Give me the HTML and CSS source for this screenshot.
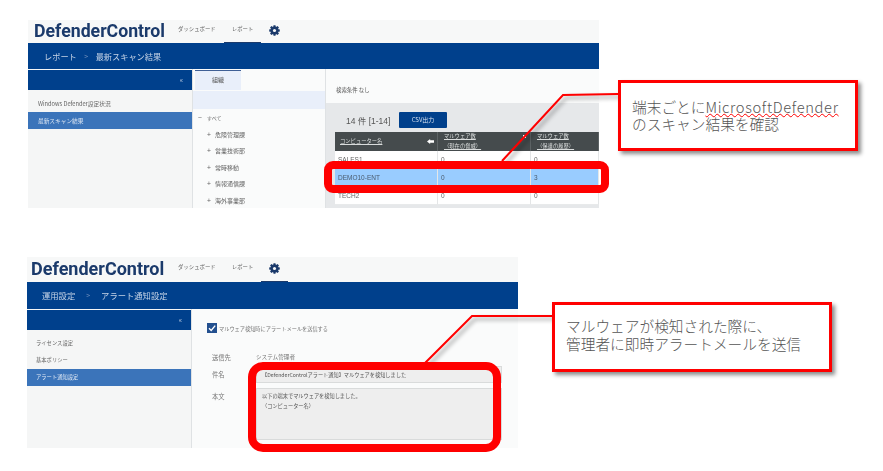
FILE: index.html
```html
<!DOCTYPE html>
<html lang="ja">
<head>
    <meta charset="utf-8" />
    <title>DefenderControl</title>
    <link rel="stylesheet" href="styles.css">
</head>
<body>
    <div class="slide">
        <!-- report screen -->
        <div class="shot shot-report">
            <div class="topbar">
                <span class="logo">DefenderControl</span>
                <a class="nav">ダッシュボード</a>
                <a class="nav active">レポート</a>
                <a class="nav gear">
                    <svg width="11" height="11" viewBox="0 0 24 24"><use href="#cog"/></svg>
                </a>
            </div>
            <div class="crumb"><span>レポート</span><span class="sep">&gt;</span><span>最新スキャン結果</span></div>
            <div class="main">
                <div class="side">
                    <div class="side-head">&laquo;</div>
                    <div class="side-list">
                        <div class="side-item">Windows Defender設定状況</div>
                        <div class="side-item selected">最新スキャン結果</div>
                    </div>
                </div>
                <div class="tree">
                    <div class="tab-row"><div class="tab">組織</div></div>
                    <div class="strip"></div>
                    <ul class="tree-list">
                        <li class="root">すべて</li>
                        <li>危険管理課</li>
                        <li>営業技術部</li>
                        <li>常時移動</li>
                        <li>情報通信課</li>
                        <li>海外事業部</li>
                    </ul>
                </div>
                <div class="result">
                    <div class="cond">検索条件 なし</div>
                    <div class="result-body">
                        <div class="count-row">
                            <span class="count">14 件 [1-14]</span>
                            <a class="csv">CSV出力</a>
                        </div>
                        <div class="grid">
                            <div class="th th-one">コンピューター名<i class="arrow"></i></div>
                            <div class="th">マルウェア数<br>（現在の脅威）<i class="dot"></i></div>
                            <div class="th">マルウェア数<br>（保護の履歴）</div>
                            <div class="td">SALES1</div><div class="td">0</div><div class="td">0</div>
                            <div class="td hit">DEMO10-ENT</div><div class="td hit">0</div><div class="td hit">3</div>
                            <div class="td">TECH2</div><div class="td">0</div><div class="td">0</div>
                        </div>
                    </div>
                </div>
            </div>
        </div>

        <!-- alert settings screen -->
        <div class="shot shot-alert">
            <div class="topbar">
                <span class="logo">DefenderControl</span>
                <a class="nav">ダッシュボード</a>
                <a class="nav">レポート</a>
                <a class="nav gear active">
                    <svg width="11" height="11" viewBox="0 0 24 24"><use href="#cog"/></svg>
                </a>
            </div>
            <div class="crumb crumb-big"><span>運用設定</span><span class="sep">&gt;</span><span>アラート通知設定</span></div>
            <div class="main">
                <div class="side">
                    <div class="side-head">&laquo;</div>
                    <div class="side-list">
                        <div class="side-item">ライセンス設定</div>
                        <div class="side-item">基本ポリシー</div>
                        <div class="side-item selected">アラート通知設定</div>
                    </div>
                </div>
                <div class="form">
                    <div class="check-row">
                        <span class="check">
                            <svg width="10" height="10" viewBox="0 0 10 10"><path d="M2 5.2 L4.2 7.4 L8.2 2.6" fill="none" stroke="#fff" stroke-width="1.4"/></svg>
                        </span>
                        マルウェア検知時にアラートメールを送信する
                    </div>
                    <div class="form-grid">
                        <div class="label">送信先</div>
                        <div class="value">システム管理者</div>
                        <div class="label">件名</div>
                        <div class="input">【DefenderControlアラート通知】マルウェアを検知しました</div>
                        <div class="label label-body">本文</div>
                        <div class="input area">以下の端末でマルウェアを検知しました。<br>（コンピューター名）</div>
                    </div>
                </div>
            </div>
        </div>

        <!-- annotations -->
        <svg class="lines" width="883" height="471">
            <polyline points="618,94 563,95 502,161" fill="none" stroke="#ff0000" stroke-width="2"/>
            <polyline points="552,316 472,316 425,363" fill="none" stroke="#ff0000" stroke-width="2"/>
        </svg>
        <div class="frame frame-row"></div>
        <div class="frame frame-mail"></div>
        <div class="note note-one">
            <div class="note-line">端末ごとに<span class="typo">MicrosoftDefender</span></div>
            <div class="note-line">のスキャン結果を確認</div>
        </div>
        <div class="note note-two">
            <div class="note-line">マルウェアが検知された際に、</div>
            <div class="note-line">管理者に即時アラートメールを送信</div>
        </div>
    </div>

    <svg width="0" height="0" class="defs">
        <symbol id="cog" viewBox="0 0 24 24">
            <g fill="#1b3a6b">
                <rect x="9.5" y="0.5" width="5" height="23" rx="1"/>
                <rect x="9.5" y="0.5" width="5" height="23" rx="1" transform="rotate(45 12 12)"/>
                <rect x="9.5" y="0.5" width="5" height="23" rx="1" transform="rotate(90 12 12)"/>
                <rect x="9.5" y="0.5" width="5" height="23" rx="1" transform="rotate(135 12 12)"/>
            </g>
            <circle cx="12" cy="12" r="6.5" fill="none" stroke="#1b3a6b" stroke-width="4"/>
            <circle cx="12" cy="12" r="3.4" fill="#f7f8f8"/>
        </symbol>
    </svg>
</body>
</html>
```

FILE: styles.css
```css
html, body {
    margin: 0;
    padding: 0;
    background: #fff;
    overflow: hidden;
}

.slide {
    position: relative;
    width: 883px;
    height: 471px;
    font-family: "Noto Sans CJK JP", "Liberation Sans", sans-serif;
    color: #555;
}

.defs {
    position: absolute;
}

/* screenshots sit on the slide like pictures */
.shot {
    position: absolute;
    display: flex;
    flex-direction: column;
    overflow: hidden;
    background: #f5f6f6;
    filter: blur(0.4px);
    font-size: 6px;
}

.shot-report {
    left: 28px;
    top: 20px;
    width: 571px;
    height: 188px;
}

.shot-alert {
    left: 27px;
    top: 257px;
    width: 491px;
    height: 191px;
}

.topbar {
    display: flex;
    align-items: stretch;
    height: 23px;
    flex: none;
    background: #f7f8f8;
}

.shot-alert .topbar {
    height: 25px;
}

.logo {
    margin-left: 6px;
    width: 136px;
    font-family: Roboto, "Liberation Sans", sans-serif;
    font-size: 17.7px;
    font-weight: 700;
    line-height: 22px;
    color: #1b3a6b;
}

.shot-alert .logo {
    margin-left: 4px;
    width: 139px;
    font-size: 18px;
    line-height: 24px;
}

.nav {
    display: flex;
    align-items: center;
    padding: 0 8px 4px;
    font-size: 5.4px;
    color: #666;
    border-bottom: 1px solid transparent;
}

.nav.active {
    border-bottom-color: #1b3a6b;
}

.gear {
    padding: 0 8px 2px;
}

.crumb {
    display: flex;
    align-items: center;
    gap: 7.5px;
    height: 26px;
    flex: none;
    box-sizing: border-box;
    padding: 0 0 1px 16px;
    background: #00408c;
    color: #c5d3e6;
    font-size: 8.2px;
}

.crumb-big {
    height: 27px;
    gap: 11px;
    padding-left: 15px;
    font-size: 8.3px;
}

.sep {
    font-size: 7px;
    color: #6f8fbc;
}

.main {
    display: flex;
    flex: 1;
    min-height: 0;
}

.side {
    width: 165px;
    flex: none;
    box-sizing: border-box;
    border-right: 1px solid #dfe2e4;
}

.side-head {
    height: 20px;
    margin-top: 1px;
    padding-right: 9px;
    background: #00408c;
    color: #b9c9df;
    font-size: 7px;
    line-height: 18px;
    text-align: right;
}

.side-list {
    padding-top: 5px;
}

.side-item {
    height: 17px;
    padding-left: 10px;
    font-size: 5.7px;
    line-height: 17px;
    color: #666;
}

.shot-alert .side-item {
    padding-left: 9px;
    font-size: 5.3px;
}

.side-item.selected {
    background: #3b74ba;
    color: #dfe8f4;
}

.tree {
    width: 133px;
    flex: none;
    box-sizing: border-box;
    background: #fafbfb;
    border-right: 1px solid #dfe2e4;
}

.tab-row {
    height: 21px;
    padding-left: 2px;
}

.tab {
    width: 46px;
    height: 20px;
    margin-top: 1px;
    border-top: 1px solid #3f5f95;
    background: #e9effa;
    box-sizing: border-box;
    line-height: 18px;
    text-align: center;
}

.strip {
    height: 18px;
    background: #e9effa;
}

.tree-list {
    margin: 0;
    padding: 1px 0 0 22px;
    list-style: none;
}

.tree-list li {
    position: relative;
    height: 16.5px;
    line-height: 16.5px;
    color: #666;
}

.tree-list li::before {
    content: "+";
    position: absolute;
    left: -8px;
    top: -1px;
    font-size: 7px;
}

.tree-list .root {
    margin-left: -8px;
    font-size: 5px;
}

.tree-list .root::before {
    content: "−";
    left: -9px;
}

.result {
    flex: 1;
    display: flex;
    flex-direction: column;
    min-width: 0;
}

.cond {
    height: 34px;
    flex: none;
    box-sizing: border-box;
    padding: 16px 0 0 10px;
    background: #fafbfb;
    font-size: 5.4px;
    line-height: 10px;
}

.result-body {
    flex: 1;
    padding-left: 9px;
    background: #e6e8ea;
}

.count-row {
    display: flex;
    align-items: center;
    height: 29px;
    padding-left: 11px;
    box-sizing: border-box;
    padding-top: 4px;
}

.count {
    width: 53px;
    font-family: "Liberation Sans", "Noto Sans CJK JP", sans-serif;
    font-size: 8.5px;
    color: #555;
}

.csv {
    width: 48px;
    height: 16px;
    border-radius: 1px;
    background: #00408c;
    color: #d5e0ef;
    font-size: 6px;
    line-height: 15px;
    text-align: center;
}

.grid {
    display: grid;
    grid-template-columns: 103px 93px 1fr;
    grid-template-rows: 19px repeat(3, 18px);
}

.th {
    position: relative;
    box-sizing: border-box;
    padding-left: 6px;
    background: #454b4d;
    border-right: 1px solid #5d6365;
    color: #d9dcdc;
    font-size: 5.3px;
    line-height: 9.5px;
    text-decoration: underline;
    text-align: left;
}

.th-one {
    padding-left: 5px;
    line-height: 19px;
}

.arrow {
    position: absolute;
    right: 3px;
    top: 7px;
    width: 7px;
    height: 5px;
    background: #fff;
    clip-path: polygon(0 50%, 45% 0, 45% 25%, 100% 25%, 100% 75%, 45% 75%, 45% 100%);
}

.dot {
    position: absolute;
    right: 4px;
    top: 3px;
    width: 3px;
    height: 3px;
    background: #fff;
}

.td {
    box-sizing: border-box;
    padding-left: 3px;
    background: #fff;
    border-right: 1px solid #e4e6e7;
    border-bottom: 1px solid #e8eaeb;
    font-family: "Liberation Sans", sans-serif;
    font-size: 6.5px;
    line-height: 18.5px;
    color: #666;
}

.td.hit {
    background: #99ccff;
    color: #4a5a6c;
    line-height: 18px;
}

.form {
    flex: 1;
    background: #fafbfb;
    padding: 14px 0 0 15px;
}

.check-row {
    display: flex;
    align-items: center;
    gap: 2px;
    height: 10px;
    font-size: 5.2px;
    color: #777;
}

.check {
    display: block;
    width: 10px;
    height: 10px;
    background: #23508f;
}

.form-grid {
    display: grid;
    grid-template-columns: 44px 246px;
    grid-template-rows: 17px 17px 57px;
    margin-top: 16px;
    margin-left: 5px;
}

.label {
    font-size: 6.3px;
    line-height: 17px;
    color: #777;
}

.label-body {
    margin-top: 5px;
}

.value {
    font-size: 5.6px;
    line-height: 17px;
    color: #777;
}

.input {
    box-sizing: border-box;
    padding-left: 5px;
    background: #eeeeee;
    border: 1px solid #d9dbdb;
    font-size: 5.2px;
    line-height: 15px;
    color: #555;
}

.area {
    height: 52px;
    margin-top: 5px;
    padding-top: 2px;
    line-height: 9.5px;
}

/* annotations over the screenshots */
.lines {
    position: absolute;
    left: 0;
    top: 0;
    filter: drop-shadow(3px 3px 2px rgba(0, 0, 0, 0.4));
}

.frame {
    position: absolute;
    box-sizing: border-box;
    border: 8px solid #ff0000;
}

.frame-row {
    left: 324px;
    top: 161px;
    width: 285px;
    height: 32px;
    border-radius: 9px;
}

.frame-mail {
    left: 248px;
    top: 362px;
    width: 253px;
    height: 90px;
    border-radius: 15px;
}

.note {
    position: absolute;
    box-sizing: border-box;
    border: 3px solid #ff0000;
    background: #fff;
    box-shadow: 3px 3px 4px rgba(0, 0, 0, 0.45);
    font-family: "Noto Sans CJK JP", "Open Sans", sans-serif;
    font-size: 14.7px;
    font-weight: 300;
    color: #555;
}

.note-line {
    height: 18px;
    line-height: 18px;
    white-space: nowrap;
}

.note-one {
    left: 618px;
    top: 80px;
    width: 240px;
    height: 71px;
    padding: 15px 0 0 11px;
}

.note-one .note-line {
    height: 17px;
    line-height: 17px;
}

.note-two {
    left: 552px;
    top: 302px;
    width: 280px;
    height: 70px;
    padding: 12px 0 0 11px;
}

.typo {
    letter-spacing: 0.65px;
    text-decoration: underline wavy #ff0000 1px;
    text-underline-offset: 0;
}
```
